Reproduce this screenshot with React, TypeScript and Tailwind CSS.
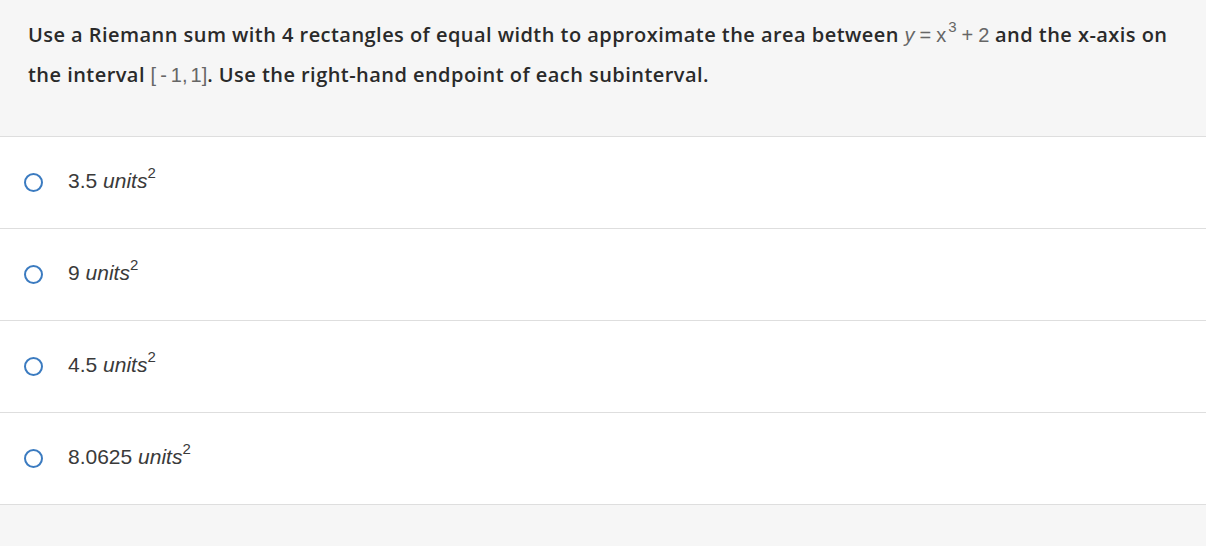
const options = ["3.5", "9", "4.5", "8.0625"];

const Math: React.FC<{ children: React.ReactNode }> = ({ children }) => (
  <span className="font-['Liberation_Sans',Arial,sans-serif] text-[#666] font-normal text-[20px] tracking-normal">
    {children}
  </span>
);

export default function App() {
  return (
    <div className="min-h-[546px] w-[1206px] bg-[#f6f6f6] flex flex-col">
      <div className="h-[137px] px-[28px] pt-[15px] border-b border-[#dedede] font-['Open_Sans',sans-serif] font-semibold text-[20px] tracking-[0.45px] leading-[40px] text-[#2a2a2a]">
        Use a Riemann sum with 4 rectangles of equal width to approximate the
        area between{" "}
        <Math>
          <i>y</i>
          <span className="mx-[5px]">=</span>x
          <sup className="text-[15px] -top-[10px] ml-[2px]">3</sup>
          <span className="mx-[5px]">+</span>2
        </Math>{" "}
        and the x-axis on the interval{" "}
        <Math>
          [<span className="mx-[4px]">-</span>1,<span className="ml-[3px]">1</span>]
        </Math>
        . Use the right-hand endpoint of each subinterval.
      </div>
      <div className="bg-white flex flex-col">
        {options.map((opt) => (
          <label
            key={opt}
            className="h-[92px] border-b border-[#dedede] flex items-center gap-[25px] pl-[24px] cursor-pointer"
          >
            <span className="w-[19px] h-[19px] rounded-full border-2 border-[#3b7bc0] shrink-0" />
            <span className="font-['Liberation_Sans',Arial,sans-serif] text-[21px] text-[#3a3a3a] -mt-[4px]">
              {opt} <i>units</i>
              <sup className="text-[15px] -top-[10px]">2</sup>
            </span>
          </label>
        ))}
      </div>
    </div>
  );
}
